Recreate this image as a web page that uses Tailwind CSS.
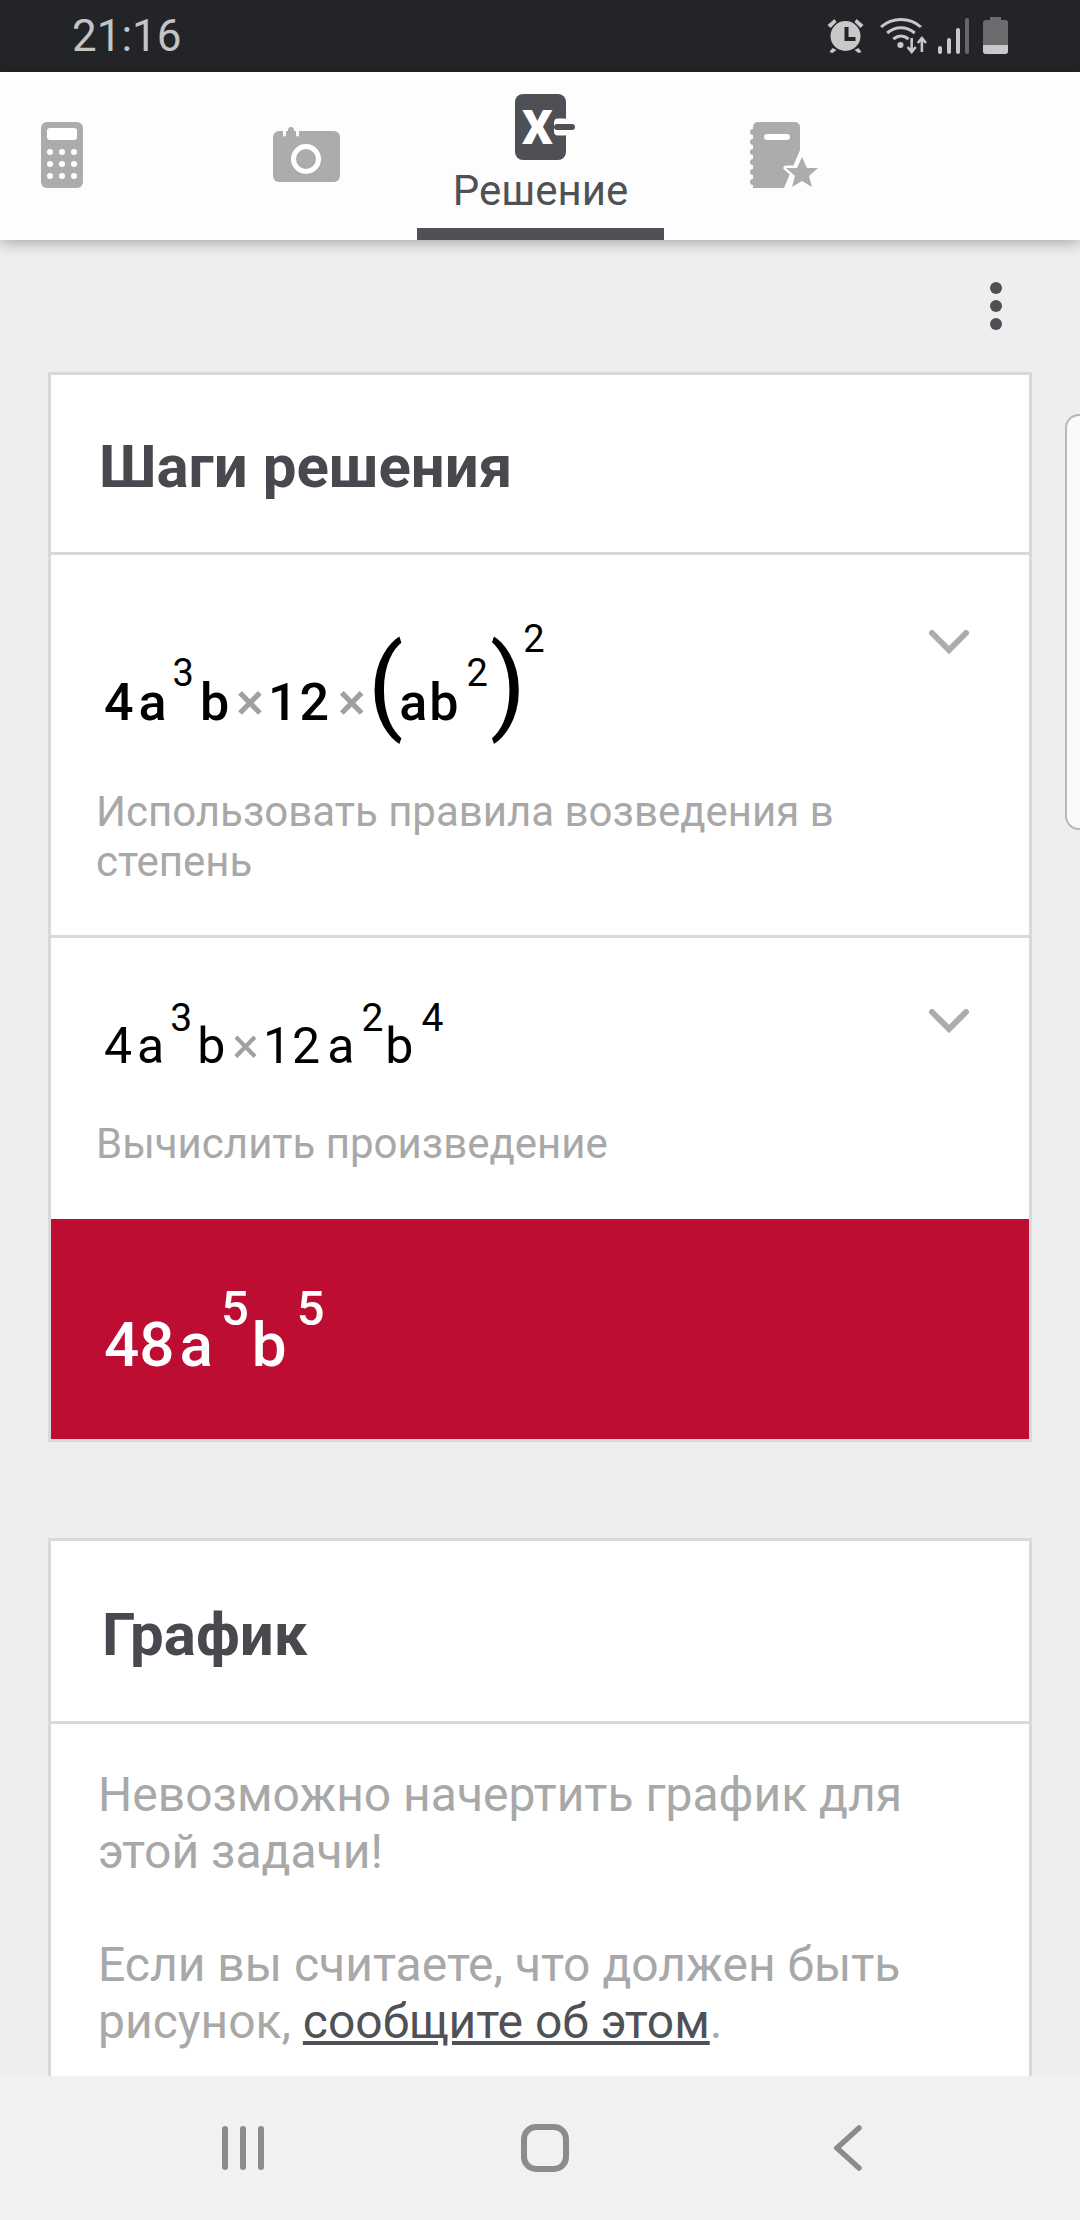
<!DOCTYPE html>
<html lang="ru">
<head>
  <meta charset="UTF-8" />
  <meta name="viewport" content="width=device-width, initial-scale=1.0"/>
  <title>Решение</title>
  <script src="https://cdn.jsdelivr.net/npm/@tailwindcss/browser@4"></script>
</head>
<body class="bg-[#eeeeee] font-['Roboto',sans-serif] w-[1080px] h-[2220px] overflow-hidden relative">
  <!-- Status bar -->
  <div class="h-[72px] bg-[#232428] flex items-center justify-between pl-[72px] pr-[72px]">
    <span class="text-[44px] text-[#c4c4c4] leading-none">21:16</span>
    <div class="flex items-center">
      <svg width="39" height="38" viewBox="1 1 38 38" fill="#c8c8c8">
        <circle cx="20" cy="20" r="15"/>
        <path d="M2 9l7-6 2 3-6 6zM38 9l-7-6-2 3 6 6zM7 32l-3 4 3 1 4-3zM33 32l3 4-3 1-4-3z"/>
        <path d="M19 11h4v10h7v4H19z" fill="#232428"/>
      </svg>
      <svg width="47" height="38" viewBox="0 0 46 38" preserveAspectRatio="none" class="ml-[15px]" fill="none" stroke="#c8c8c8" stroke-width="3">
        <path d="M1 10C12 0 29 0 40 10M7 16c8-7 19-7 27 0M13 22c5-4 10-4 15 0"/>
        <circle cx="20" cy="28" r="3" fill="#c8c8c8" stroke="none"/>
        <path d="M31 21v14M27 30l4 5 4-5M41 35V21M37 26l4-5 4 5" stroke-width="2.5"/>
      </svg>
      <div class="ml-[11px] flex items-end gap-[5px] h-[36px]">
        <div class="w-[4px] h-[8px] bg-[#c8c8c8] rounded-full"></div>
        <div class="w-[4px] h-[16px] bg-[#c8c8c8] rounded-full"></div>
        <div class="w-[4px] h-[26px] bg-[#c8c8c8] rounded-full"></div>
        <div class="w-[4px] h-[36px] bg-[#66676a] rounded-full"></div>
      </div>
      <div class="relative ml-[14px] w-[25px] h-[34px] mt-[2px] bg-[#6b6c6e] rounded-[3px]">
        <div class="absolute -top-[3px] left-[7px] w-[11px] h-[4px] bg-[#6b6c6e]"></div>
        <div class="absolute bottom-0 inset-x-0 h-[9px] bg-[#c8c8c8] rounded-b-[3px]"></div>
      </div>
    </div>
  </div>

  <!-- Tabs -->
  <div class="h-[168px] bg-[#fdfdfd] shadow-[0_3px_14px_rgba(0,0,0,0.3)] relative flex">
    <div class="w-[170px] pl-[41px] pt-[50px]">
      <svg width="42" height="66" viewBox="0 0 42 66">
        <rect width="42" height="66" rx="6" fill="#acacac"/>
        <rect x="6" y="6" width="30" height="12" rx="3" fill="#fff"/>
        <g fill="#fff"><circle cx="9" cy="30" r="3"/><circle cx="21" cy="30" r="3"/><circle cx="33" cy="30" r="3"/><circle cx="9" cy="42" r="3"/><circle cx="21" cy="42" r="3"/><circle cx="33" cy="42" r="3"/><circle cx="9" cy="54" r="3"/><circle cx="21" cy="54" r="3"/><circle cx="33" cy="54" r="3"/></g>
      </svg>
    </div>
    <div class="w-[247px] pl-[103px] pt-[55px]">
      <svg width="67" height="55" viewBox="0 0 67 55">
        <rect y="4" width="67" height="51" rx="6" fill="#acacac"/>
        <rect x="15" width="6" height="12" rx="3" fill="#acacac"/>
        <path d="M11.5 1v7M24.5 1v7" stroke="#fdfdfd" stroke-width="3" stroke-linecap="round"/>
        <circle cx="33" cy="32" r="12.5" fill="none" stroke="#fff" stroke-width="5"/>
      </svg>
    </div>
    <div class="w-[247px] flex flex-col items-center relative">
      <svg width="60" height="66" viewBox="0 0 60 66" class="mt-[22px] ml-[9px]">
        <rect width="51" height="66" rx="8" fill="#4f5055"/>
        <text x="7" y="50" font-family="Roboto" font-weight="900" font-size="48" fill="#fff">X</text>
        <rect x="39" y="24.5" width="14" height="17" rx="4" fill="#fdfdfd"/>
        <path d="M42 33h15" stroke="#4f5055" stroke-width="6" stroke-linecap="round"/>
      </svg>
      <span class="text-[42px] text-[#505156] leading-none mt-[10px]">Решение</span>
      <div class="absolute bottom-0 inset-x-0 h-[12px] bg-[#505156]"></div>
    </div>
    <div class="pl-[86px] pt-[50px]">
      <svg width="68" height="66" viewBox="0 0 68 66">
        <path d="M3 5a5 5 0 0 1 5-5h37a5 5 0 0 1 5 5v23L34 66H3z" fill="#acacac"/>
        <g fill="#acacac"><circle cx="3" cy="10" r="3"/><circle cx="3" cy="20" r="3"/><circle cx="3" cy="30" r="3"/><circle cx="3" cy="40" r="3"/><circle cx="3" cy="50" r="3"/><circle cx="3" cy="60" r="3"/></g>
        <rect x="14" y="12" width="26" height="6" rx="3" fill="#fff"/>
        <path d="M52 35l5 11h11l-9 8 3 11-10-6-10 6 3-11-9-8h11z" fill="#acacac" stroke="#fdfdfd" stroke-width="5" stroke-linejoin="round" paint-order="stroke"/>
      </svg>
    </div>
  </div>

  <!-- Content -->
  <div class="px-[48px]">
    <div class="flex justify-end pt-[42px] pr-[30px] h-[132px]">
      <div class="flex flex-col gap-[6px]">
        <div class="w-[12px] h-[12px] rounded-full bg-[#4f5055]"></div>
        <div class="w-[12px] h-[12px] rounded-full bg-[#4f5055]"></div>
        <div class="w-[12px] h-[12px] rounded-full bg-[#4f5055]"></div>
      </div>
    </div>

    <!-- Steps card -->
    <div class="border-[3px] border-[#d9d9d9] bg-white h-[1070px] flex flex-col">
      <div class="h-[180px] shrink-0 border-b-[3px] border-[#d9d9d9] flex items-center pl-[48px] pt-[6px]">
        <h2 class="text-[60px] font-bold text-[#48494e] leading-none">Шаги решения</h2>
      </div>

      <div class="h-[383px] shrink-0 border-b-[3px] border-[#d9d9d9] relative pl-[45px]">
        <svg width="40" height="24" viewBox="0 0 40 24" class="absolute right-[60px] top-[75px]" fill="none" stroke="#acacac" stroke-width="6" stroke-linecap="round"><path d="M3 3l17 17L37 3"/></svg>
        <div class="h-[232px] pt-[78px] pl-[8px] flex items-baseline text-black font-medium text-[52px] leading-none">
          <span>4</span><span class="ml-[5px]">a</span><span class="text-[38px] font-normal -translate-y-[34px] ml-[6px]">3</span><span class="ml-[6px]">b</span><span class="text-[#a0a0a0] ml-[7px]">×</span><span class="ml-[4px] tracking-[2px]">12</span><span class="text-[#a0a0a0] ml-[7px]">×</span><span class="text-[104px] font-normal ml-[2px] leading-none">(</span><span class="-ml-[4px]">a</span><span class="ml-[2px]">b</span><span class="text-[38px] font-normal -translate-y-[34px] ml-[8px]">2</span><span class="text-[104px] font-normal ml-[2px] leading-none">)</span><span class="text-[38px] font-normal -translate-y-[68px] -ml-[3px]">2</span>
        </div>
        <p class="text-[42px] leading-[50px] text-[#a8a8a8] w-[800px]">Использовать правила возведения в степень</p>
      </div>

      <div class="h-[281px] shrink-0 relative pl-[45px]">
        <svg width="40" height="24" viewBox="0 0 40 24" class="absolute right-[60px] top-[71px]" fill="none" stroke="#acacac" stroke-width="6" stroke-linecap="round"><path d="M3 3l17 17L37 3"/></svg>
        <div class="h-[181px] pt-[83px] pl-[8px] flex items-baseline text-black text-[50px] leading-none">
          <span>4</span><span class="ml-[5px]">a</span><span class="text-[39px] -translate-y-[32px] ml-[6px]">3</span><span class="ml-[5px]">b</span><span class="text-[#a0a0a0] ml-[7px]">×</span><span class="ml-[4px] tracking-[1px]">12</span><span class="ml-[6px]">a</span><span class="text-[39px] -translate-y-[32px] ml-[7px]">2</span><span class="ml-[2px]">b</span><span class="text-[39px] -translate-y-[32px] ml-[8px]">4</span>
        </div>
        <p class="text-[42px] leading-[50px] text-[#a8a8a8]">Вычислить произведение</p>
      </div>

      <div class="flex-1 bg-[#bd0d33] pl-[53px] pt-[95px] flex items-baseline text-white font-medium text-[62px] leading-none">
        <span>48</span><span class="ml-[5px]">a</span><span class="text-[49px] -translate-y-[41px] ml-[8px]">5</span><span class="ml-[3px]">b</span><span class="text-[49px] -translate-y-[41px] ml-[10px]">5</span>
      </div>
    </div>

    <!-- Graph card -->
    <div class="mt-[96px] border-[3px] border-[#d9d9d9] bg-white h-[700px]">
      <div class="h-[183px] border-b-[3px] border-[#d9d9d9] flex items-center pl-[51px] pt-[8px]">
        <h2 class="text-[60px] font-bold text-[#48494e] leading-none">График</h2>
      </div>
      <div class="pl-[47px] pt-[42px] text-[48px] leading-[57px] text-[#a8a8a8]">
        <p class="w-[880px]">Невозможно начертить график для этой задачи!</p>
        <p class="w-[880px] mt-[56px]">Если вы считаете, что должен быть рисунок, <a class="text-[#505156] underline">сообщите об этом</a>.</p>
      </div>
    </div>
  </div>

  <!-- Scroll handle -->
  <div class="absolute right-0 top-[414px] w-[15px] h-[416px] border-2 border-r-0 border-[#b8b8b8] rounded-l-[14px] bg-[#fafafa]"></div>

  <!-- Nav bar -->
  <div class="absolute bottom-0 inset-x-0 h-[144px] bg-[#f1f1f1] flex items-center">
    <div class="ml-[222px] flex gap-[12px]">
      <div class="w-[6px] h-[44px] bg-[#8c8c8c] rounded-full"></div>
      <div class="w-[6px] h-[44px] bg-[#8c8c8c] rounded-full"></div>
      <div class="w-[6px] h-[44px] bg-[#8c8c8c] rounded-full"></div>
    </div>
    <div class="ml-[257px] w-[48px] h-[48px] border-[6px] border-[#8c8c8c] rounded-[15px]"></div>
    <svg width="28" height="46" viewBox="0 0 28 46" class="ml-[265px]" fill="none" stroke="#8c8c8c" stroke-width="5.5" stroke-linecap="round"><path d="M25 3L3 23l22 20"/></svg>
  </div>
</body>
</html>
